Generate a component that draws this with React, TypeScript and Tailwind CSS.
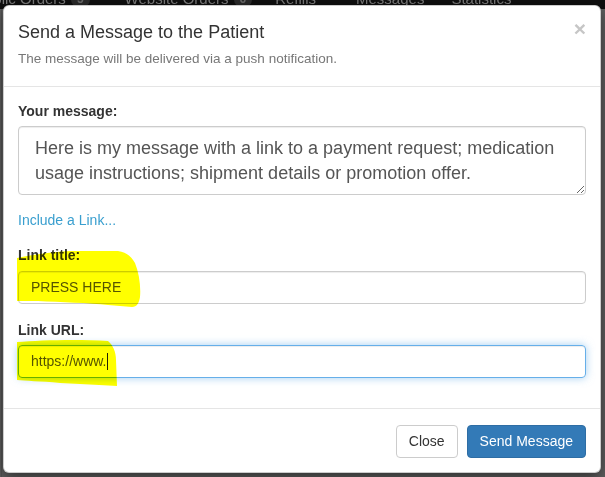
import React from 'react';

const font = { fontFamily: '"Liberation Sans", Arial, sans-serif' };

const NavItem = ({ label, badge, className }: { label: string; badge?: string; className?: string }) => (
  <div className={`flex items-center gap-[5px] ${className ?? ''}`}>
    <span>{label}</span>
    {badge && (
      <span className="rounded-[9px] bg-[#2b2b2b] px-[6px] text-[12px] font-bold leading-[15px] text-[#6a6a6a]">{badge}</span>
    )}
  </div>
);

export default function App() {
  return (
    <div className="relative h-[477px] w-[605px] overflow-hidden bg-[#606060]" style={font}>
      {/* page behind the backdrop */}
      <div className="h-[9px] overflow-hidden bg-[#0f0f0f]">
        <div className="-mt-[9px] flex items-center text-[15px] leading-[16px] text-[#7c7c7c]">
          <NavItem label="Public Orders" badge="5" className="-ml-[25px]" />
          <NavItem label="Website Orders" badge="6" className="ml-[35px]" />
          <NavItem label="Refills" className="ml-[23px]" />
          <NavItem label="Messages" className="ml-[40px]" />
          <NavItem label="Statistics" className="ml-[27px]" />
        </div>
      </div>
      <div className="ml-[1px] h-full w-[1px] bg-[#555]" />

      {/* modal */}
      <div className="absolute left-[3px] top-[5px] flex h-[468px] w-[598px] flex-col rounded-[6px] border border-black/20 bg-white shadow-[0_5px_15px_rgba(0,0,0,0.5)]">
        <div className="flex items-start justify-between border-b border-[#e5e5e5] px-[14px] pb-[15px] pt-[14px]">
          <div>
            <h4 className="text-[18px] leading-[24px] text-[#333]">Send a Message to the Patient</h4>
            <p className="mb-[3px] mt-[5px] text-[13.5px] leading-[19px] text-[#777]">The message will be delivered via a push notification.</p>
          </div>
          <button className="-mt-[2px] text-[21px] font-bold leading-none text-[#c6c6c6]">×</button>
        </div>

        <div className="flex-1 px-[14px] pt-[14px] text-[14px] text-[#333]">
          <label className="mb-[5px] block font-bold leading-[20px]">Your message:</label>
          <textarea
            readOnly
            className="block h-[69px] w-full rounded-[4px] border border-[#ccc] px-[16px] py-[9px] text-[18px] leading-[25px] text-[#555] shadow-[inset_0_1px_1px_rgba(0,0,0,0.075)] outline-none"
            defaultValue="Here is my message with a link to a payment request; medication usage instructions; shipment details or promotion offer."
          />
          <div className="mt-[15px] leading-[20px] text-[#3a9fcf]">Include a Link...</div>

          <label className="mb-[6px] mt-[15px] block font-bold leading-[20px]">Link title:</label>
          <div className="flex h-[33px] w-full items-center rounded-[4px] border border-[#ccc] px-[12px] text-[#555] shadow-[inset_0_1px_1px_rgba(0,0,0,0.075)]">
            PRESS HERE
          </div>

          <label className="mb-[5px] mt-[16px] block font-bold leading-[20px]">Link URL:</label>
          <div className="flex h-[33px] w-full items-center rounded-[4px] border border-[#66afe9] px-[12px] text-[#555] shadow-[inset_0_1px_1px_rgba(0,0,0,0.075),0_0_8px_rgba(102,175,233,0.6)]">
            https://www.
            <span className="ml-[1px] h-[17px] w-[1px] bg-[#222]" />
          </div>
        </div>

        <div className="flex justify-end gap-[9px] border-t border-[#e5e5e5] px-[14px] pb-[14px] pt-[16px] text-[14px]">
          <button className="h-[33px] rounded-[4px] border border-[#ccc] bg-white px-[12px] text-[#333]">Close</button>
          <button className="h-[33px] rounded-[4px] border border-[#2e6da4] bg-[#337ab7] px-[12px] text-white">Send Message</button>
        </div>
      </div>

      {/* highlighter marks */}
      <svg className="pointer-events-none absolute left-0 top-0 mix-blend-multiply" width="605" height="477">
        <path
          d="M17,258 C30,255 50,252 72,251 L118,251 C126,252 131,256 135,263 C139,273 141,286 140,297 C139,303 137,307 132,307 L108,305 C90,303 60,302 38,301 L17,301 Z"
          fill="#ffff00"
        />
        <path
          d="M17,342 C40,340 80,339 108,341 C113,345 116,352 116,360 L117,386 C100,385 80,384 60,383 C40,381 25,381 17,380 Z"
          fill="#ffff00"
        />
      </svg>
    </div>
  );
}
